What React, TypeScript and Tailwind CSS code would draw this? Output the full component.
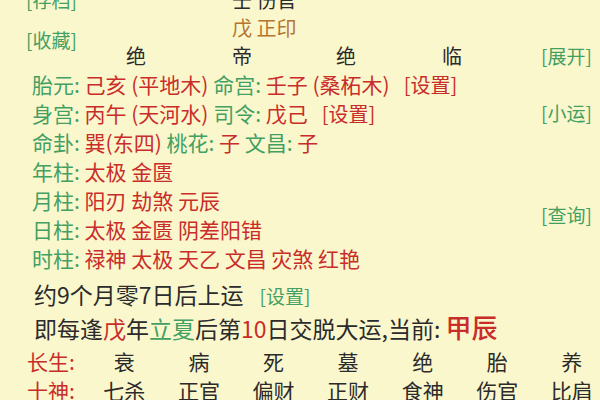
import React from "react";

const G = "text-[#43a063]";
const R = "text-[#c92d2a]";

// ── Tiny helpers ────────────────────────────────────────────────────────
function Btn({ children, className = "" }: { children: React.ReactNode; className?: string }) {
  return <span className={`${G} text-[19px] ${className}`}>[{children}]</span>;
}

function Row({ children }: { children: React.ReactNode }) {
  return <div className="h-[29px] leading-[29px] pl-[32px] text-[21px] whitespace-nowrap">{children}</div>;
}

const Lb = ({ t }: { t: string }) => <span className={G}>{t}: </span>;
const Vl = ({ t }: { t: string }) => <span className={R}>{t}</span>;

const shensha: [string, string[]][] = [
  ["年柱", ["太极", "金匮"]],
  ["月柱", ["阳刃", "劫煞", "元辰"]],
  ["日柱", ["太极", "金匮", "阴差阳错"]],
  ["时柱", ["禄神", "太极", "天乙", "文昌", "灾煞", "红艳"]],
];

const changsheng = ["衰", "病", "死", "墓", "绝", "胎", "养"];
const shishen = ["七杀", "正官", "偏财", "正财", "食神", "伤官", "比肩"];

export default function App() {
  return (
    <div
      className="w-[600px] h-[400px] overflow-hidden bg-[#fbf7cd] text-[#2b2b2b]"
      style={{ fontFamily: '"Noto Sans CJK SC", "Noto Sans", sans-serif' }}
    >
      <div className="-mt-[14px] flex">
        {/* Left: main content */}
        <div className="flex-1">
          {/* Hidden stems + 长生 header */}
          <div className="grid grid-cols-[126px_106px_104px_106px_1fr] grid-rows-[28px_28px_28px] leading-[28px] text-[20px] whitespace-nowrap">
            <div className="col-start-1 row-start-1 pl-[26px]"><Btn>存档</Btn></div>
            <div className="col-start-3 row-start-1">壬 伤官</div>
            <div className="col-start-1 row-start-2 row-span-2 pl-[26px] flex items-center pb-[4px]"><Btn>收藏</Btn></div>
            <div className="col-start-3 row-start-2 text-[#b5742e]">戊 正印</div>
            <div className="col-start-2 row-start-3">绝</div>
            <div className="col-start-3 row-start-3">帝</div>
            <div className="col-start-4 row-start-3">绝</div>
            <div className="col-start-5 row-start-3">临</div>
          </div>

          <Row>
            <Lb t="胎元" /><Vl t="己亥 (平地木)" /> <Lb t="命宫" /><Vl t="壬子 (桑柘木)" />
            <span className={`${R} text-[20px] ml-[14px]`}>[设置]</span>
          </Row>
          <Row>
            <Lb t="身宫" /><Vl t="丙午 (天河水)" /> <Lb t="司令" /><Vl t="戊己" />
            <span className={`${R} text-[20px] ml-[14px]`}>[设置]</span>
          </Row>
          <Row>
            <Lb t="命卦" /><Vl t="巽(东四)" /> <Lb t="桃花" /><Vl t="子" /> <Lb t="文昌" /><Vl t="子" />
          </Row>
          {shensha.map(([k, v]) => (
            <Row key={k}>
              <Lb t={k} /><Vl t={v.join(" ")} />
            </Row>
          ))}
        </div>

        {/* Right: action links */}
        <div className="w-[62px] pr-[8px] flex flex-col items-end leading-[28px]">
          <div className="mt-[56px] h-[28px]"><Btn>展开</Btn></div>
          <div className="mt-[29px] h-[28px]"><Btn>小运</Btn></div>
          <div className="mt-[74px] h-[28px]"><Btn>查询</Btn></div>
        </div>
      </div>

      {/* 大运 info */}
      <div className="mt-[7px] pl-[34px] h-[28px] leading-[28px] text-[23px] whitespace-nowrap">
        约9个月零7日后上运
        <Btn className="ml-[16px]">设置</Btn>
      </div>
      <div className="mt-[5px] pl-[34px] h-[28px] leading-[28px] text-[23px] whitespace-nowrap">
        即每逢<span className={R}>戊</span>年<span className={G}>立夏</span>后第<span className={R}>10</span>日交脱大运,当前:{" "}
        <span className={`${R} text-[26px] font-medium`}>甲辰</span>
      </div>

      {/* 长生 / 十神 table */}
      <div className="mt-[6px] pl-[27px] grid grid-cols-[60px_repeat(7,74.6px)] leading-[29px] text-[21px] whitespace-nowrap">
        <div className={R}>长生:</div>
        {changsheng.map((c, i) => (
          <div key={i} className="text-center">{c}</div>
        ))}
        <div className={R}>十神:</div>
        {shishen.map((c, i) => (
          <div key={i} className="text-center">{c}</div>
        ))}
      </div>
    </div>
  );
}
